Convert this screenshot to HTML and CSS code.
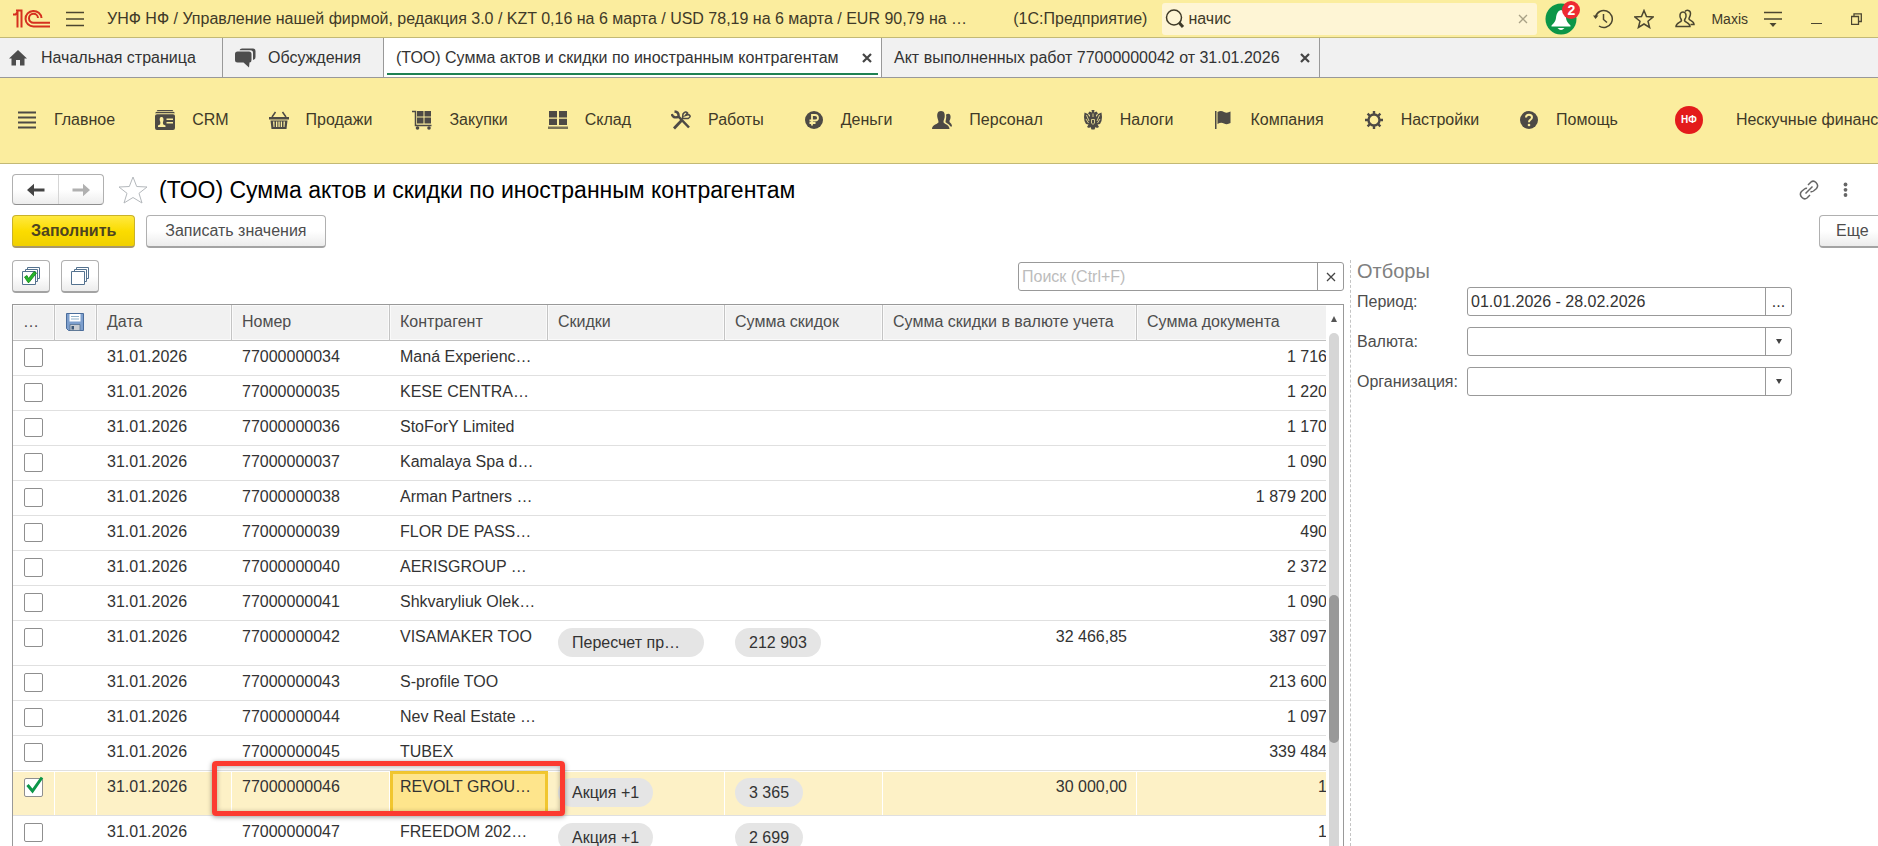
FILE: index.html
```html
<!DOCTYPE html>
<html lang="ru">
<head>
  <meta charset="UTF-8" />
  <meta name="viewport" content="width=device-width, initial-scale=1.0"/>
  <title>(ТОО) Сумма актов и скидки по иностранным контрагентам</title>
  <link rel="stylesheet" href="styles.css">
</head>
<body>
  <header class="topbar">
    <svg class="logo" width="38" height="20" viewBox="0 0 38 20" fill="none" stroke="#d5301f" stroke-width="2">
      <path d="M0 5.500H2.500L4.500 3V18.500M3 1.500H8.500V18.500"/>
      <path d="M28.500 9A8 7.800 0 1 0 20.500 17.500H37"/>
      <path d="M25 9A4.500 4.500 0 1 0 20.500 13.800H37"/>
    </svg>
    <button class="icon-btn burger" aria-label="Меню">
      <svg width="18" height="16" viewBox="0 0 18 16" stroke="#4b4630" stroke-width="1.500"><path d="M0 1.500H18M0 8H18M0 14.500H18"/></svg>
    </button>
    <div class="app-title">УНФ НФ / Управление нашей фирмой, редакция 3.0 / KZT 0,16 на 6 марта / USD 78,19 на 6 марта / EUR 90,79 на …</div>
    <div class="app-name">(1С:Предприятие)</div>
    <div class="global-search">
      <svg width="20" height="20" viewBox="0 0 20 20" fill="none" stroke="#3f3a28"><circle cx="9" cy="8.500" r="7.500" stroke-width="1.500"/><path d="M14 13.500L18 18" stroke-width="3"/></svg>
      <input type="text" value="начис" aria-label="Поиск">
      <button class="icon-btn" aria-label="Очистить">
        <svg width="10" height="10" viewBox="0 0 10 10" stroke="#a9a186" stroke-width="1.300"><path d="M1 1L9 9M9 1L1 9"/></svg>
      </button>
    </div>
    <button class="icon-btn bell" aria-label="Уведомления">
      <svg width="32" height="32" viewBox="0 0 32 32"><circle cx="16" cy="16" r="15.500" fill="#0c9648"/><path d="M16 7C12.500 8 11.500 11 11 15C10.600 18 9.500 19.500 6.500 22.500V23.500H25.500V22.500C22.500 19.500 21.400 18 21 15C20.500 11 19.500 8 16 7Z" fill="#fff"/><path d="M12.500 25H19.500Q16 29 12.500 25Z" fill="#fff"/></svg>
      <span class="badge">2</span>
    </button>
    <button class="icon-btn history" aria-label="История">
      <svg width="20" height="20" viewBox="0 0 20 20" fill="none" stroke="#4b4630" stroke-width="1.500"><path d="M2.500 8A8.500 8.500 0 1 1 6 17M10.500 5V10.500L14 13.500"/><path d="M0 6.500H5.500L2.500 10Z" fill="#4b4630" stroke="none"/></svg>
    </button>
    <button class="icon-btn" aria-label="Избранное">
      <svg width="20" height="20" viewBox="0 0 20 20" fill="none" stroke="#4b4630" stroke-width="1.500"><path d="M10 1.500L12.500 7.500L19 8L14 12.200L15.600 18.500L10 15L4.400 18.500L6 12.200L1 8L7.500 7.500Z"/></svg>
    </button>
    <button class="icon-btn" aria-label="Пользователи">
      <svg width="20" height="20" viewBox="0 0 20 20" fill="none" stroke="#4b4630" stroke-width="1.500"><path d="M8 3C5.500 3 4.800 5 5 7.500C5.200 9.500 6.500 10 6.500 11.500C6 13.500 1 13.500 1 17.500H15C15 13.500 10 13.500 9.500 11.500C9.500 10 10.800 9.500 11 7.500C11.200 5 10.500 3 8 3Z"/><path d="M10 2.500C11.500 .500 15.500 1 15.500 4.500C15.500 7.500 13.800 8.500 14 10C14.500 12 19 11.500 19 15.500H15.500"/></svg>
    </button>
    <span class="user">Maxis</span>
    <button class="icon-btn" aria-label="Сервис">
      <svg width="18" height="18" viewBox="0 0 18 18"><path d="M0 2.500H18M0 9H18" stroke="#4b4630" stroke-width="1.500"/><path d="M5.500 13H12.500L9 17Z" fill="#4b4630"/></svg>
    </button>
    <button class="icon-btn win" aria-label="Свернуть">
      <svg width="11" height="12" viewBox="0 0 11 12"><path d="M0 10.500H11" stroke="#4b4630"/></svg>
    </button>
    <button class="icon-btn win" aria-label="Развернуть">
      <svg width="11" height="12" viewBox="0 0 11 12" fill="none" stroke="#4b4630" stroke-width="1.300"><path d="M.500 3.500H7.500V11.300H.500ZM3 3.500V.800H10.300V8.500H7.500"/></svg>
    </button>
  </header>

  <nav class="tabs">
    <a class="tab tab-home" href="#">
      <svg width="18" height="16" viewBox="0 0 18 16" fill="#4d4d4d"><path d="M9 0L18 8.500H15.500V15.500H11V10H7V15.500H2.500V8.500H0Z"/></svg>
      Начальная страница
    </a>
    <a class="tab tab-talk" href="#">
      <svg width="21" height="20" viewBox="0 0 21 20" fill="#4d4d4d"><path d="M2.500 3.500H14Q16.500 3.500 16.500 6V12Q16.500 14.500 14.500 14.500L14 19.500L8.500 14.500H2.500Q0 14.500 0 12V6Q0 3.500 2.500 3.500Z"/><path d="M4.500 2.300Q5 .500 7 .500H18Q20.500 .500 20.500 3V9Q20.500 11.500 18 12V5Q18 2.300 15.500 2.300Z"/></svg>
      Обсуждения
    </a>
    <a class="tab tab-report active" href="#">
      (ТОО) Сумма актов и скидки по иностранным контрагентам
      <svg width="10" height="10" viewBox="0 0 10 10" stroke="#444" stroke-width="2.200"><path d="M1 1L9 9M9 1L1 9"/></svg>
    </a>
    <a class="tab tab-doc" href="#">
      Акт выполненных работ 77000000042 от 31.01.2026
      <svg width="10" height="10" viewBox="0 0 10 10" stroke="#444" stroke-width="2.200"><path d="M1 1L9 9M9 1L1 9"/></svg>
    </a>
  </nav>

  <nav class="sections">
    <a href="#"><svg width="20" height="20" viewBox="0 0 20 20" stroke="#4d4a45" stroke-width="2"><path d="M1 2.500H19M1 7.500H19M1 12.500H19M1 17.500H19"/></svg>Главное</a>
    <a href="#"><svg width="20" height="20" viewBox="0 0 20 20" fill="#4d4a45"><path d="M2.500 0H17.500L18.500 1.200H1.500ZM1 2H19L20 3.200H0Z"/><path fill-rule="evenodd" d="M2 4.200H18Q20 4.200 20 6V18Q20 20 18 20H2Q0 20 0 18V6Q0 4.200 2 4.200ZM6.500 7C4.500 7 4.500 9.500 5 11C5.500 12.500 5.500 13 5 14.500L3 15.500V17H10.500V15.500L8.300 14.500C7.800 13 7.800 12.500 8.300 11C8.800 9.500 8.500 7 6.500 7ZM11.500 8.500V10H18V8.500ZM11.500 12V13.500H18V12Z"/></svg>CRM</a>
    <a href="#"><svg width="20" height="20" viewBox="0 0 20 20" fill="#4d4a45"><path d="M0 7H20V9.500H0Z"/><path d="M6.500 2L3 7M13.500 2L17 7" stroke="#4d4a45" stroke-width="1.500"/><path fill-rule="evenodd" d="M1.500 10.500H18.500L17.500 19H2.500ZM4 11.500L4.500 17H5.500V11.500ZM7 11.500V17H8.300V11.500ZM9.400 11.500V17H10.700V11.500ZM11.800 11.500V17H13V11.500ZM14.500 11.500V17H15.500L16 11.500Z"/></svg>Продажи</a>
    <a href="#"><svg width="20" height="20" viewBox="0 0 20 20" fill="#4d4a45"><path d="M0 1.500H3.500V15.500H19.500" fill="none" stroke="#4d4a45" stroke-width="1.500"/><path d="M5 1H11.500V6.500H5ZM12.500 1H19V6.500H12.500ZM5 7.500H11.500V13.500H5ZM12.500 7.500H19V13.500H12.500Z"/><circle cx="5.500" cy="18" r="1.800"/><circle cx="17" cy="18" r="1.800"/></svg>Закупки</a>
    <a href="#"><svg width="20" height="20" viewBox="0 0 20 20" fill="#4d4a45"><path d="M1 1H9V7.500H1ZM11 1H19V7.500H11ZM1 8.800H9V15H1ZM11 8.800H19V15H11Z"/><path d="M0 16.500H20V19H0Z" fill="#7a7458"/></svg>Склад</a>
    <a href="#"><svg width="20" height="20" viewBox="0 0 20 20" fill="none" stroke="#4d4a45"><path d="M3.500 1.500Q8 2 7.500 6.500L18 17.500M.800 4Q2 8.500 7 7" stroke-width="2.500"/><path d="M11 10L3 18.500" stroke-width="2.800"/><path d="M11.500 8.500L12 4Q14.500 .500 16.500 3L14.500 5.500L17.500 4.500Q21 6.500 17 8.500Z" stroke-width="1.600"/></svg>Работы</a>
    <a href="#"><svg width="20" height="20" viewBox="0 0 20 20"><circle cx="10" cy="10" r="9" fill="#4d4a45"/><path d="M8 15.500V5H11Q14 5 14 8Q14 10.500 11 10.500H5.500M5.500 13H11.500" fill="none" stroke="#fbed9e" stroke-width="1.800"/></svg>Деньги</a>
    <a href="#"><svg width="20" height="20" viewBox="0 0 20 20" fill="#4d4a45"><path d="M9 1C5.500 1 5 4 5.300 7C5.500 9 6.500 10 6.500 12C6.500 14 0 14.500 0 19H17.500C17.500 14.500 11.500 14 11.500 12C11.500 10 12.500 9 12.700 7C13 4 12.500 1 9 1Z"/><path d="M14 4.500C17.500 2.500 19 5 18.500 8C18.200 10 17.500 10 17.500 11.500C17.500 13 20 13 20 16.500H18.500C17.500 14 14 13 13.500 12C13.500 10 14.800 8 14 4.500Z"/></svg>Персонал</a>
    <a href="#"><svg width="20" height="20" viewBox="0 0 20 20" fill="#4d4a45"><path d="M8.500 0H11.500L11 2.500L13.500 1.500L15 3.500L13 5L13.500 7L15 4L18.500 2.500L19 7L18.500 11L17 14L14.500 14.500L16 17L14 18L12.500 17L11.500 19.500H8.500L7.500 17L6 18L4 17L5.500 14.500L3 14L1.500 11L1 7L1.500 2.500L5 4L6.500 7L7 5L5 3.500L6.500 1.500L9 2.500Z"/><path d="M3.500 5L6 11M16.500 5L14 11M3 9L5.500 13M17 9L14.500 13M8.500 9.500H11.500V13L10 14.500L8.500 13ZM10 3.500V7" stroke="#fbed9e" stroke-width=".800" fill="none"/></svg>Налоги</a>
    <a href="#"><svg width="20" height="20" viewBox="0 0 20 20" fill="#4d4a45"><path d="M2 1H3.500V19H2ZM4.500 2Q8 0 11 2Q14 3.500 17.500 1.500V13Q14 15 11 13.500Q8 12 4.500 14Z"/></svg>Компания</a>
    <a href="#"><svg width="20" height="20" viewBox="0 0 20 20" fill="none" stroke="#4d4a45"><circle cx="10" cy="10" r="5.500" stroke-width="2.400"/><path d="M10 1V4.500M10 15.500V19M1 10H4.500M15.500 10H19M3.600 3.600L6 6M14 14L16.400 16.400M16.400 3.600L14 6M6 14L3.600 16.400" stroke-width="2.400"/></svg>Настройки</a>
    <a href="#"><svg width="20" height="20" viewBox="0 0 20 20"><circle cx="10" cy="10" r="9" fill="#4d4a45"/><path d="M7 7.500Q7 4.800 10 4.800Q13 4.800 13 7.300Q13 9 11.300 9.800Q10 10.500 10 12.200" fill="none" stroke="#fbed9e" stroke-width="2"/><circle cx="10" cy="15" r="1.300" fill="#fbed9e"/></svg>Помощь</a>
    <a href="#" class="partner"><span class="nf">НФ</span>Нескучные финансы</a>
  </nav>

  <main class="page">
    <div class="page-head">
      <div class="nav-btns">
        <button aria-label="Назад"><svg width="18" height="14" viewBox="0 0 18 14"><path d="M0 7L7 .800V5.500H17.500V8.500H7V13.200Z" fill="#444"/></svg></button>
        <button aria-label="Вперед"><svg width="18" height="14" viewBox="0 0 18 14"><path d="M18 7L11 .800V5.500H.500V8.500H11V13.200Z" fill="#b0b0b0"/></svg></button>
      </div>
      <button class="icon-btn fav" aria-label="В избранное">
        <svg width="30" height="28" viewBox="0 0 30 28" fill="#fff" stroke="#b4b8bc"><path d="M15 1L18.700 10.500L29 11L21 17.300L24 27L15 21.500L6 27L9 17.300L1 11L11.300 10.500Z"/></svg>
      </button>
      <h1>(ТОО) Сумма актов и скидки по иностранным контрагентам</h1>
      <button class="icon-btn link" aria-label="Ссылка">
        <svg width="20" height="20" viewBox="0 0 20 20" fill="none" stroke="#666" stroke-width="1.500"><path d="M9 5L12 2Q14.500 0 17 2.500Q20 5.500 17.500 8.500L14.500 11Q13 12 11.500 11.500M11 15L8 18Q5.500 20 3 17.500Q0 14.500 2.500 11.500L5.500 9Q7 8 8 8.500M6.500 13.500L13.500 6.500"/></svg>
      </button>
      <button class="icon-btn" aria-label="Еще действия">
        <svg width="5" height="16" viewBox="0 0 5 16" fill="#666"><circle cx="2.500" cy="2.500" r="1.900"/><circle cx="2.500" cy="7.800" r="1.900"/><circle cx="2.500" cy="13" r="1.900"/></svg>
      </button>
    </div>

    <div class="toolbar">
      <button class="btn primary">Заполнить</button>
      <button class="btn">Записать значения</button>
      <button class="btn more">Еще</button>
    </div>

    <div class="columns">
      <section class="list">
        <div class="list-tools">
          <button class="btn square" aria-label="Отметить все">
            <svg width="20" height="20" viewBox="0 0 20 20" fill="#fff" stroke="#54728f"><path d="M6.500 1.500H18.500V12.500H6.500Z"/><path d="M4.500 3.500H16.500V15.500H4.500Z"/><path d="M1.500 5.500H14.500V18.500H1.500Z"/><path d="M3.500 11L6 9.500L7.500 12.500L13 5.500L15.500 7L8 16.500H7Z" fill="#27b82c" stroke="#128018" stroke-width=".800"/></svg>
          </button>
          <button class="btn square" aria-label="Снять отметки">
            <svg width="20" height="20" viewBox="0 0 20 20" fill="#fff" stroke="#54728f"><path d="M6.500 1.500H18.500V12.500H6.500Z"/><path d="M4.500 3.500H16.500V15.500H4.500Z"/><path d="M1.500 5.500H14.500V18.500H1.500Z"/></svg>
          </button>
          <div class="field list-search">
            <input type="text" placeholder="Поиск (Ctrl+F)" aria-label="Поиск">
            <button aria-label="Очистить"><svg width="10" height="10" viewBox="0 0 10 10" stroke="#444" stroke-width="1.300"><path d="M1 1L9 9M9 1L1 9"/></svg></button>
          </div>
        </div>

        <div class="grid">
          <div class="grid-view">
            <table>
              <colgroup>
                <col class="c-check"><col class="c-check"><col class="c-date"><col class="c-mid"><col class="c-mid"><col class="c-disc"><col class="c-mid"><col class="c-cur"><col>
              </colgroup>
              <thead>
                <tr>
                  <th class="dots">…</th>
                  <th class="disk"><svg width="18" height="18" viewBox="0 0 18 18"><path d="M.500 .500H17.500V17.500H2.500L.500 15.500Z" fill="#7d9fcd" stroke="#4a6d9c"/><path d="M3.500 1H14.500V8.500H3.500Z" fill="#fff"/><path d="M5 3.500H13M5 6H13" stroke="#8fb0c9"/><path d="M4 11.500H14V17.500H4Z" fill="#c9cdd2" stroke="#56718f" stroke-width=".800"/><path d="M5.500 13H8V16.500H5.500Z" fill="#3d5878"/></svg></th>
                  <th>Дата</th>
                  <th>Номер</th>
                  <th>Контрагент</th>
                  <th>Скидки</th>
                  <th>Сумма скидок</th>
                  <th>Сумма скидки в валюте учета</th>
                  <th>Сумма документа</th>
                </tr>
              </thead>
              <tbody>
                <tr><td class="mark"><input type="checkbox" aria-label="77000000034"></td><td></td><td>31.01.2026</td><td>77000000034</td><td>Maná Experienc…</td><td></td><td></td><td class="num"></td><td class="sum">1 716</td></tr>
                <tr><td class="mark"><input type="checkbox" aria-label="77000000035"></td><td></td><td>31.01.2026</td><td>77000000035</td><td>KESE CENTRA…</td><td></td><td></td><td class="num"></td><td class="sum">1 220</td></tr>
                <tr><td class="mark"><input type="checkbox" aria-label="77000000036"></td><td></td><td>31.01.2026</td><td>77000000036</td><td>StoForY Limited</td><td></td><td></td><td class="num"></td><td class="sum">1 170</td></tr>
                <tr><td class="mark"><input type="checkbox" aria-label="77000000037"></td><td></td><td>31.01.2026</td><td>77000000037</td><td>Kamalaya Spa d…</td><td></td><td></td><td class="num"></td><td class="sum">1 090</td></tr>
                <tr><td class="mark"><input type="checkbox" aria-label="77000000038"></td><td></td><td>31.01.2026</td><td>77000000038</td><td>Arman Partners …</td><td></td><td></td><td class="num"></td><td class="sum">1 879 200</td></tr>
                <tr><td class="mark"><input type="checkbox" aria-label="77000000039"></td><td></td><td>31.01.2026</td><td>77000000039</td><td>FLOR DE PASS…</td><td></td><td></td><td class="num"></td><td class="sum">490</td></tr>
                <tr><td class="mark"><input type="checkbox" aria-label="77000000040"></td><td></td><td>31.01.2026</td><td>77000000040</td><td>AERISGROUP …</td><td></td><td></td><td class="num"></td><td class="sum">2 372</td></tr>
                <tr><td class="mark"><input type="checkbox" aria-label="77000000041"></td><td></td><td>31.01.2026</td><td>77000000041</td><td>Shkvaryliuk Olek…</td><td></td><td></td><td class="num"></td><td class="sum">1 090</td></tr>
                <tr class="tall"><td class="mark"><input type="checkbox" aria-label="77000000042"></td><td></td><td>31.01.2026</td><td>77000000042</td><td>VISAMAKER TOO</td><td><span class="tag wide">Пересчет пр…</span></td><td><span class="tag">212 903</span></td><td class="num">32 466,85</td><td class="sum">387 097</td></tr>
                <tr><td class="mark"><input type="checkbox" aria-label="77000000043"></td><td></td><td>31.01.2026</td><td>77000000043</td><td>S-profile TOO</td><td></td><td></td><td class="num"></td><td class="sum">213 600</td></tr>
                <tr><td class="mark"><input type="checkbox" aria-label="77000000044"></td><td></td><td>31.01.2026</td><td>77000000044</td><td>Nev Real Estate …</td><td></td><td></td><td class="num"></td><td class="sum">1 097</td></tr>
                <tr><td class="mark"><input type="checkbox" aria-label="77000000045"></td><td></td><td>31.01.2026</td><td>77000000045</td><td>TUBEX</td><td></td><td></td><td class="num"></td><td class="sum">339 484</td></tr>
                <tr class="tall selected">
                  <td class="mark"><input type="checkbox" aria-label="77000000046" checked><svg class="tick" width="18" height="18" viewBox="0 0 18 18"><path d="M1.500 9L6.500 15L16 1.500" fill="none" stroke="#0c9648" stroke-width="3"/></svg></td>
                  <td></td><td>31.01.2026</td><td class="noted">77000000046<span class="callout"></span></td><td class="current">REVOLT GROU…</td><td><span class="tag">Акция +1</span></td><td><span class="tag">3 365</span></td><td class="num">30 000,00</td><td class="sum">1</td>
                </tr>
                <tr class="tall"><td class="mark"><input type="checkbox" aria-label="77000000047"></td><td></td><td>31.01.2026</td><td>77000000047</td><td>FREEDOM 202…</td><td><span class="tag">Акция +1</span></td><td><span class="tag">2 699</span></td><td class="num"></td><td class="sum">1</td></tr>
              </tbody>
            </table>
          </div>
          <div class="scrollbar">
            <svg width="8" height="6" viewBox="0 0 8 6"><path d="M4 0L7 6H1Z" fill="#555"/></svg>
            <div class="track"><div class="thumb"></div></div>
          </div>
        </div>
      </section>

      <aside class="filters">
        <h2>Отборы</h2>
        <div class="filter">
          <label for="period">Период:</label>
          <div class="field"><input type="text" id="period" value="01.01.2026 - 28.02.2026"><button aria-label="Выбрать период">...</button></div>
        </div>
        <div class="filter">
          <label for="currency">Валюта:</label>
          <div class="field"><select id="currency"><option></option></select><span class="arrow"></span></div>
        </div>
        <div class="filter">
          <label for="org">Организация:</label>
          <div class="field"><select id="org"><option></option></select><span class="arrow"></span></div>
        </div>
      </aside>
    </div>
  </main>
</body>
</html>
```
FILE: styles.css
```css
* {
  box-sizing: border-box;
}

body {
  margin: 0;
  height: 100vh;
  display: flex;
  flex-direction: column;
  overflow: hidden;
  background: #fff;
  color: #333;
  font-family: "Liberation Sans", Arial, sans-serif;
  font-size: 16px;
  line-height: 18px;
}

button, input, select {
  font: inherit;
  color: inherit;
}

a {
  color: inherit;
  text-decoration: none;
}

svg {
  display: block;
  flex: none;
}

.icon-btn {
  padding: 0;
  border: none;
  background: none;
  flex: none;
}

/* top bar */
.topbar {
  flex: none;
  display: flex;
  align-items: center;
  height: 38px;
  padding: 0 16px 0 13px;
  background: #fbed9e;
  border-bottom: 1px solid #c3b975;
  color: #3f3a28;
  white-space: nowrap;
}

.burger {
  margin: 0 23px 0 15px;
}

.app-title {
  flex: 1;
  overflow: hidden;
  text-overflow: ellipsis;
}

.app-name {
  margin: 0 15px 0 12px;
}

.global-search {
  flex: 0 0 375px;
  display: flex;
  align-items: center;
  height: 32px;
  padding: 0 9px 0 3px;
  background: #fef5d5;
  border-radius: 3px;
}

.global-search input {
  flex: 1;
  min-width: 0;
  padding: 0 3px;
  border: none;
  background: none;
  outline: none;
}

.bell {
  position: relative;
  margin: 0 16px 0 8px;
}

.badge {
  position: absolute;
  top: -2px;
  right: -3px;
  width: 18px;
  height: 18px;
  border-radius: 50%;
  background: #ee2a32;
  color: #fff;
  font-size: 14px;
  font-weight: bold;
}

.topbar .icon-btn + .icon-btn:not(.history):not(.win) {
  margin-left: 21px;
}

.user {
  margin: 0 16px;
  font-size: 14px;
}

.win {
  margin-left: 29px;
}

/* tabs */
.tabs {
  flex: none;
  display: flex;
  height: 40px;
  background: #f1f1f1;
  border-bottom: 1px solid #999;
  white-space: nowrap;
}

.tab {
  display: flex;
  align-items: center;
  gap: 9px;
  padding: 0 9px 0 12px;
  border-right: 1px solid #999;
}

.tab-home {
  gap: 14px;
  min-width: 223px;
  padding-left: 9px;
}

.tab-talk {
  gap: 12px;
  min-width: 161px;
}

.tab-report {
  justify-content: space-between;
  min-width: 498px;
}

.tab-doc {
  justify-content: space-between;
  min-width: 438px;
}

.tab.active {
  position: relative;
  background: #fff;
}

.tab.active::after {
  content: "";
  position: absolute;
  left: 3px;
  right: 3px;
  bottom: 2px;
  height: 2px;
  background: #1f8152;
}

/* sections */
.sections {
  flex: none;
  display: flex;
  align-items: center;
  gap: 40px;
  height: 86px;
  padding: 0 0 2px 17px;
  background: #fbed9e;
  border-bottom: 1px solid #c3b975;
  color: #3f3a28;
  white-space: nowrap;
  overflow: hidden;
}

.sections a {
  display: flex;
  align-items: center;
  gap: 17px;
}

.sections .partner {
  gap: 33px;
  margin-left: 17px;
}

.nf {
  width: 28px;
  height: 28px;
  border-radius: 50%;
  background: #e31b1b;
  color: #fff;
  font-size: 10px;
  font-weight: bold;
  line-height: 28px;
  text-align: center;
}

/* page */
.page {
  flex: 1;
  min-height: 0;
  display: flex;
  flex-direction: column;
  padding: 10px 0 0 12px;
}

.page-head {
  flex: none;
  display: flex;
  align-items: center;
  padding-right: 30px;
}

.nav-btns {
  display: flex;
  border: 1px solid #b0b0b0;
  border-bottom-color: #8e8e8e;
  border-radius: 4px;
  background: linear-gradient(#fff 50%, #ededed);
}

.nav-btns button {
  display: flex;
  align-items: center;
  justify-content: center;
  width: 45px;
  height: 29px;
  padding: 0;
  border: none;
  background: none;
}

.nav-btns button + button {
  border-left: 1px solid #d5d5d5;
}

.fav {
  margin: 0 11px 0 14px;
}

h1 {
  flex: 1;
  margin: 0;
  color: #000;
  font-size: 23px;
  font-weight: normal;
  line-height: 28px;
}

.link {
  margin-right: 24px;
}

.toolbar {
  flex: none;
  display: flex;
  gap: 11px;
  margin-top: 10px;
}

.btn {
  flex: none;
  height: 33px;
  padding: 0 18px;
  border: 1px solid #b0b0b0;
  border-bottom: 2px solid #a3a3a3;
  border-radius: 4px;
  background: linear-gradient(#fff 50%, #ececec);
  color: #4d4d4d;
  white-space: nowrap;
}

.btn.primary {
  border-color: #c9b22a;
  border-bottom-color: #a8986a;
  background: linear-gradient(#ffe940, #fbdc00 50%, #f0d000);
  color: #4d4420;
  font-weight: bold;
}

.btn.more {
  width: 80px;
  margin-left: auto;
  margin-right: -21px;
  padding-left: 16px;
  text-align: left;
}

.btn.square {
  display: flex;
  align-items: center;
  justify-content: center;
  width: 38px;
  padding: 0;
}

.columns {
  flex: 1;
  min-height: 0;
  display: flex;
  gap: 6px;
  margin-top: 12px;
}

/* list */
.list {
  flex: 1;
  min-width: 0;
  display: flex;
  flex-direction: column;
}

.list-tools {
  flex: none;
  display: flex;
  align-items: center;
  gap: 11px;
  margin-bottom: 11px;
}

.field {
  display: flex;
  height: 29px;
  border: 1px solid #999;
  border-radius: 3px;
  background: #fff;
}

.field input,
.field select {
  flex: 1;
  min-width: 0;
  padding: 0 3px;
  border: none;
  background: none;
  outline: none;
  appearance: none;
}

.field button,
.field .arrow {
  display: flex;
  align-items: center;
  justify-content: center;
  width: 26px;
  padding: 0;
  border: none;
  border-left: 1px solid #999;
  background: none;
}

.field .arrow::before {
  content: "";
  border: 3px solid transparent;
  border-top: 5px solid #444;
  border-bottom: none;
}

.field input::placeholder {
  color: #bcbcbc;
  opacity: 1;
}

.list-search {
  width: 326px;
  margin-left: auto;
}

.grid {
  flex: 1;
  min-height: 0;
  display: flex;
  border: 1px solid #999;
  border-bottom: none;
}

.grid-view {
  flex: 1;
  min-width: 0;
  overflow: hidden;
}

/* the last column runs under the scrollbar */
table {
  width: calc(100% + 1px);
  table-layout: fixed;
  border-spacing: 0;
}

.c-check { width: 42px; }
.c-date { width: 135px; }
.c-mid { width: 158px; }
.c-disc { width: 177px; }
.c-cur { width: 254px; }

th {
  height: 36px;
  padding: 0 9px 2px 10px;
  border-right: 1px solid #c4c4c4;
  border-bottom: 1px solid #c0c0c0;
  background: #f1f1f1;
  box-shadow: inset 0 0 0 1px #fafafa;
  color: #4d4d4d;
  font-weight: normal;
  text-align: left;
  white-space: nowrap;
}

th:last-child {
  border-right: none;
}

th.disk {
  padding-left: 11px;
}

td {
  padding: 7px 10px 9px;
  border-bottom: 1px solid #e0e0e0;
  vertical-align: top;
  white-space: nowrap;
}

td.num {
  text-align: right;
}

td.sum {
  padding-right: 0;
  text-align: right;
}

td.mark {
  position: relative;
  padding-bottom: 0;
}

.mark input {
  display: block;
  width: 19px;
  height: 19px;
  margin: 0 0 0 1px;
  border: 1px solid #8f8f8f;
  border-radius: 2px;
  background: #fff;
  appearance: none;
}

.tall td {
  padding-bottom: 8px;
}

.tick {
  position: absolute;
  left: 13px;
  top: 5px;
}

.tag {
  display: inline-block;
  height: 29px;
  padding: 0 14px;
  border-radius: 15px;
  background: #e5e5e5;
  line-height: 29px;
  vertical-align: top;
}

.tag.wide {
  width: 146px;
}

.selected td {
  background: #fdf1c6;
  box-shadow: inset -1px 1px 0 #fff;
}

.selected td.current {
  background: #fee58c;
  box-shadow: inset 0 0 0 3px #f1c62f;
}

td.noted {
  position: relative;
}

.callout {
  position: absolute;
  left: -20px;
  top: -10px;
  width: 353px;
  height: 55px;
  border: 5px solid #fc3a30;
  border-radius: 4px;
  box-shadow: 0 1px 5px rgba(0, 0, 0, 0.4), inset 0 1px 5px rgba(0, 0, 0, 0.3);
  z-index: 1;
}

.scrollbar {
  display: flex;
  flex-direction: column;
  align-items: center;
  width: 17px;
  padding: 11px 2px 0 0;
}

.track {
  flex: 1;
  width: 10px;
  margin-top: 11px;
  border-radius: 5px 5px 0 0;
  background: #d6d6d6;
}

.thumb {
  position: relative;
  top: 51%;
  height: 29%;
  border-radius: 5px;
  background: #999;
}

/* filters */
.filters {
  flex: 0 0 528px;
  padding: 0 86px 0 6px;
  border-left: 1px dashed #c4c4c4;
}

h2 {
  margin: 0 0 5px;
  color: #808080;
  font-size: 20px;
  font-weight: normal;
  line-height: 22px;
}

.filter {
  display: flex;
  align-items: center;
  margin-bottom: 11px;
  color: #4d4d4d;
}

.filter label {
  width: 110px;
}

.filter .field {
  flex: 1;
  color: #333;
}
```
